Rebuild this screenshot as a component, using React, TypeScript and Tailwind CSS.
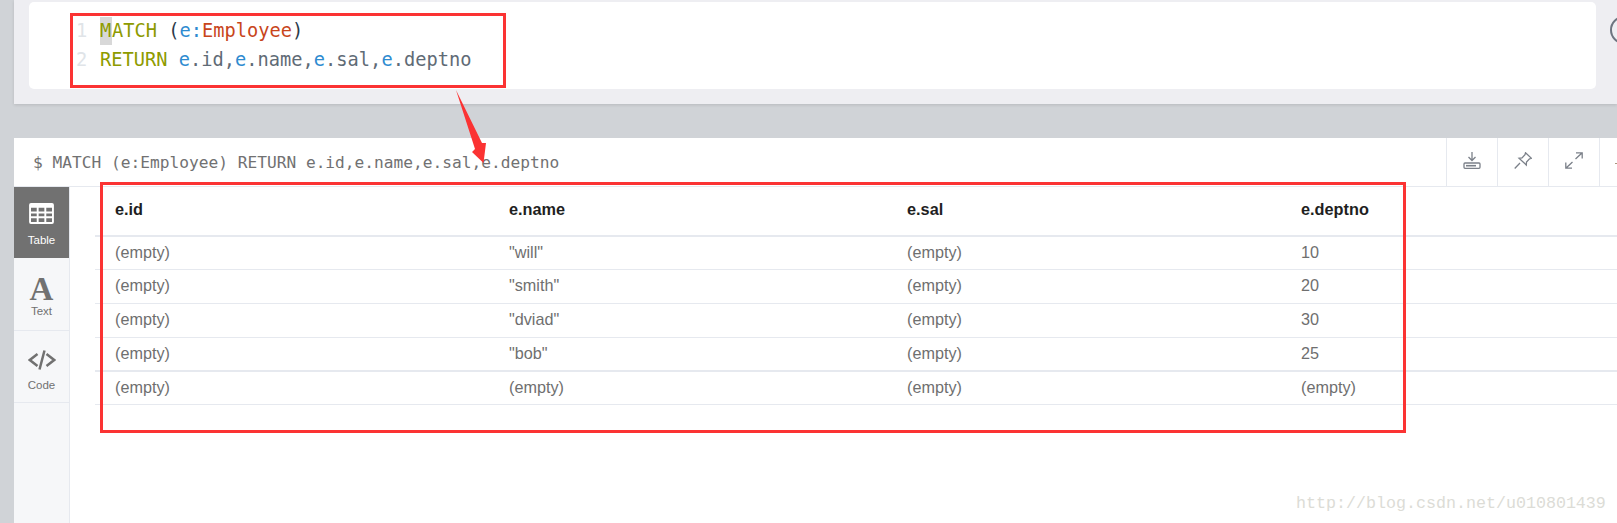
import React from 'react';

const rows = [
  { h: 'h-[33px] border-b', cells: ['(empty)', '"will"', '(empty)', '10'] },
  { h: 'h-[34px] border-b', cells: ['(empty)', '"smith"', '(empty)', '20'] },
  { h: 'h-[34px] border-b', cells: ['(empty)', '"dviad"', '(empty)', '30'] },
  { h: 'h-[34px] border-b-2', cells: ['(empty)', '"bob"', '(empty)', '25'] },
  { h: 'h-[33px] border-b', cells: ['(empty)', '(empty)', '(empty)', '(empty)'] },
];

const Kw: React.FC<{ children: React.ReactNode }> = ({ children }) => <span className="text-[#8e9b00]">{children}</span>;
const V: React.FC<{ children: React.ReactNode }> = ({ children }) => <span className="text-[#2e8bd0]">{children}</span>;

const App: React.FC = () => {
  return (
    <div className="w-[1617px] h-[523px] overflow-hidden bg-[#d0d3d7] pl-[14px] flex flex-col relative font-['Liberation_Sans',sans-serif]">
      {/* editor frame */}
      <div className="h-[104px] shrink-0 bg-[#eeeef2] pt-[2px] pl-[15px] shadow-[0_1px_3px_rgba(0,0,0,0.12)]">
        <div className="h-[87px] w-[1567px] bg-white rounded-[5px] pt-[15px] font-['DejaVu_Sans_Mono',monospace] text-[18.7px] leading-[28.5px] text-[#5f6b76] flex">
          <div className="w-[71px] pl-[47px] text-[#e0e4e8] shrink-0">
            <div>1</div>
            <div>2</div>
          </div>
          <div>
            <div>
              <span className="inline-block align-top w-[12px] h-[28px] leading-[28px] bg-[#d8d8d8]"><Kw>M</Kw></span>
              <Kw>ATCH</Kw> <span className="text-[#2b3a4a]">(</span>
              <V>e:</V>
              <span className="text-[#c8451b]">Employee</span>
              <span className="text-[#2b3a4a]">)</span>
            </div>
            <div>
              <Kw>RETURN</Kw> <V>e</V>.id,<V>e</V>.name,<V>e</V>.sal,<V>e</V>.deptno
            </div>
          </div>
        </div>
      </div>

      {/* result frame */}
      <div className="mt-[34px] flex-1 bg-white flex flex-col min-h-0">
        <div className="h-[49px] shrink-0 border-b border-[#e6e9ef] flex items-stretch">
          <div className="flex-1 pl-[19px] pt-[14px] font-['DejaVu_Sans_Mono',monospace] text-[16.2px] leading-[22px] text-[#717172]">
            $ MATCH (e:Employee) RETURN e.id,e.name,e.sal,e.deptno
          </div>
          <div className="w-[51px] border-l border-[#e6e9ef] flex items-center justify-center pb-[4px]">
            <svg width="18" height="17" viewBox="0 0 18 17" fill="none" stroke="#7b8089" strokeWidth="1.300">
              <path d="M9 0v8M5.500 5 9 8.500 12.500 5" />
              <rect x="1" y="11" width="16" height="5.300" rx="1" />
              <path d="M3 13.700h10" strokeWidth="1.600" />
            </svg>
          </div>
          <div className="w-[51px] border-l border-[#e6e9ef] flex items-center justify-center pb-[4px]">
            <svg width="18" height="17" viewBox="0 0 18 17" fill="none" stroke="#7b8089" strokeWidth="1.300">
              <path d="M.7 16.500 6 11M11.500 .8l6 5.500-2 .5-3 3.200-.2 3L5 6.300l3-.4 3-3.200z" />
            </svg>
          </div>
          <div className="w-[51px] border-l border-[#e6e9ef] flex items-center justify-center pb-[4px]">
            <svg width="18" height="17" viewBox="0 0 18 17" fill="none" stroke="#7b8089" strokeWidth="1.300">
              <path d="M.8 16.200l6.700-6.200M10.500 7l6.700-6.200M.8 10.500v5.700H7M11 .8h6.200V6.500" />
            </svg>
          </div>
          <div className="w-[18.5px] border-l border-[#e6e9ef] overflow-hidden flex items-center pl-[15px] pt-[2px]">
            <div className="w-[3px] h-[1px] shrink-0 bg-[#a8967f]" />
          </div>
        </div>

        <div className="flex-1 flex min-h-0">
          {/* view tabs */}
          <div className="w-[56px] shrink-0 bg-[#f6f7f9] border-r border-[#e6e9ef]">
            <div className="h-[71px] bg-[#717171] flex flex-col items-center pt-[16px] text-white">
              <svg width="25" height="21" viewBox="0 0 26 22">
                <path fillRule="evenodd" fill="#fff" d="M2 0h22a2 2 0 0 1 2 2v18a2 2 0 0 1-2 2H2a2 2 0 0 1-2-2V2a2 2 0 0 1 2-2zM2 5v4h6V5zM10 5v4h6V5zM18 5v4h6V5zM2 11v3h6v-3zM10 11v3h6v-3zM18 11v3h6v-3zM2 16v4h6v-4zM10 16v4h6v-4zM18 16v4h6v-4z" />
              </svg>
              <div className="text-[11.5px] leading-[14px] mt-[9px]">Table</div>
            </div>
            <div className="h-[73px] border-b border-[#e6e9ef] flex flex-col items-center pt-[17px] text-[#717171]">
              <div className="font-['Liberation_Serif',serif] font-bold text-[33px] leading-[28px] h-[28px]">A</div>
              <div className="text-[11.5px] leading-[14px] mt-[1px]">Text</div>
            </div>
            <div className="h-[72px] border-b border-[#e6e9ef] flex flex-col items-center pt-[19px] text-[#717171]">
              <svg width="28" height="20" viewBox="0 0 28 20" fill="none" stroke="#717171" strokeWidth="2.500">
                <path d="M9.500 4 1.800 10l7.700 6M18.500 4l7.700 6-7.700 6M16.500 .5l-5 19" />
              </svg>
              <div className="text-[11.5px] leading-[14px] mt-[8px]">Code</div>
            </div>
          </div>

          {/* table */}
          <div className="flex-1 pl-[25px]">
            <div className="h-[50px] border-b-2 border-[#e6e9ef] pl-[20px] pb-[3px] grid grid-cols-[394px_398px_394px_1fr] items-center font-bold text-[16.3px] text-[#1f1f1f]">
              <div>e.id</div>
              <div>e.name</div>
              <div>e.sal</div>
              <div>e.deptno</div>
            </div>
            {rows.map((r, i) => (
              <div key={i} className={`${r.h} border-[#e6e9ef] pl-[20px] pb-[2px] grid grid-cols-[394px_398px_394px_1fr] items-center text-[16.2px] text-[#6f6f6f]`}>
                {r.cells.map((c, j) => (
                  <div key={j}>{c}</div>
                ))}
              </div>
            ))}
          </div>
        </div>
      </div>

      {/* run button edge */}
      <div className="absolute left-[1610px] top-[16px] w-[28px] h-[28px] rounded-full border-2 border-[#6d7580]" />

      {/* annotations */}
      <div className="absolute left-[70px] top-[13px] w-[436px] h-[75px] border-[3px] border-[#fb3333]" />
      <div className="absolute left-[100px] top-[182px] w-[1306px] h-[251px] border-[3px] border-[#fb3333]" />
      <svg className="absolute left-[450px] top-[85px]" width="45" height="85" viewBox="0 0 45 85">
        <path fill="#fb3333" d="M6 5 32 58l4 0-2.500 20L22 67l3-3z" />
      </svg>

      <div className="absolute left-[1296px] top-[493px] font-['Liberation_Mono',monospace] text-[16.67px] leading-[22px] text-[#dcdcd6]">
        http://blog.csdn.net/u010801439
      </div>
    </div>
  );
};

export default App;
